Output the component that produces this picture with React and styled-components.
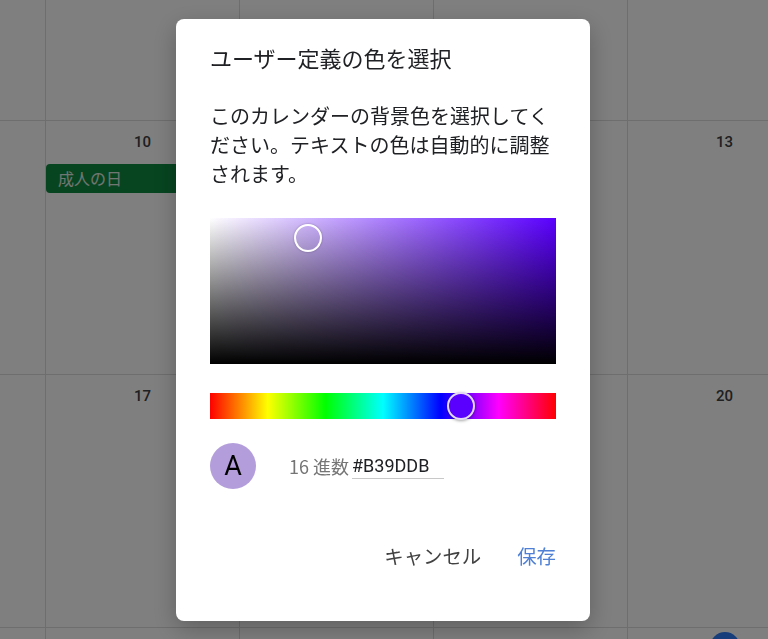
import React, { useState } from 'react';
import styled, { createGlobalStyle } from 'styled-components';

const GlobalStyle = createGlobalStyle`
  html, body {
    margin: 0;
    padding: 0;
    width: 768px;
    height: 639px;
    overflow: hidden;
    background: #ffffff;
    font-family: Roboto, "Noto Sans CJK JP", sans-serif;
  }
`;

// the month grid behind the dialog
const Month = styled.div`
  display: grid;
  grid-template-columns: 46px 194px 194px 194px 194px;
  grid-template-rows: 121px 254px 253px 253px;
  width: 768px;
  height: 639px;
  overflow: hidden;
`;

const Cell = styled.div`
  box-sizing: border-box;
  border-right: 1px solid #dcdcdc;
  border-bottom: 1px solid #dcdcdc;
  display: flex;
  flex-direction: column;
  align-items: center;
  padding-top: ${p => (p.$last ? 4 : 12)}px;
  min-width: 0;
`;

const DayNum = styled.div`
  font-family: Roboto, sans-serif;
  font-size: 15px;
  font-weight: 500;
  color: #3c4043;
  line-height: 18px;
`;

const TodayDot = styled.div`
  width: 30px;
  height: 30px;
  border-radius: 50%;
  background: #2f7cf6;
`;

const Holiday = styled.div`
  align-self: stretch;
  margin: 13px 4px 0 0;
  height: 29px;
  border-radius: 4px;
  background: #0e8a40;
  color: #e2ece5;
  font-family: "Noto Sans CJK JP", sans-serif;
  font-size: 16px;
  line-height: 29px;
  padding-left: 12px;
`;

const Scrim = styled.div`
  position: fixed;
  inset: 0;
  background: rgba(0, 0, 0, 0.5);
  display: flex;
  align-items: center;
  justify-content: center;
`;

const Dialog = styled.div`
  box-sizing: border-box;
  width: 414px;
  height: 602px;
  margin-left: -2px;
  background: #ffffff;
  border-radius: 8px;
  padding: 24px 34px 0 34px;
  display: flex;
  flex-direction: column;
  box-shadow: 0 8px 24px rgba(0, 0, 0, 0.25);
  font-family: "Noto Sans CJK JP", sans-serif;
`;

const Title = styled.h2`
  margin: 0;
  font-size: 22px;
  line-height: 28px;
  font-weight: 400;
  color: #202124;
`;

const Body = styled.p`
  margin: 30px 0 0 0;
  font-size: 20px;
  line-height: 29px;
  color: #202124;
`;

const SatBox = styled.div`
  position: relative;
  margin-top: 30px;
  height: 146px;
  background:
    linear-gradient(to top, #000000, rgba(0, 0, 0, 0)),
    linear-gradient(to right, #ffffff, ${p => p.$hueColor});
`;

const SatThumb = styled.div`
  position: absolute;
  width: 24px;
  height: 24px;
  margin: -14px 0 0 -14px;
  border: 2px solid #ffffff;
  border-radius: 50%;
  box-shadow: 0 0 2px rgba(0, 0, 0, 0.35);
`;

const HueBar = styled.div`
  position: relative;
  margin-top: 29px;
  height: 26px;
  background: linear-gradient(
    to right,
    #ff0000 0%,
    #ffff00 16.66%,
    #00ff00 33.33%,
    #00ffff 50%,
    #0000ff 66.66%,
    #ff00ff 83.33%,
    #ff0000 100%
  );
`;

const HueThumb = styled.div`
  position: absolute;
  top: 50%;
  width: 24px;
  height: 24px;
  margin: -14px 0 0 -14px;
  border: 2px solid #e4d8f6;
  border-radius: 50%;
  background: ${p => p.$hueColor};
  box-shadow: 0 1px 3px rgba(0, 0, 0, 0.35);
`;

const ValueRow = styled.div`
  display: flex;
  align-items: center;
  margin-top: 24px;
`;

const Swatch = styled.div`
  width: 46px;
  height: 46px;
  border-radius: 50%;
  background: ${p => p.$color};
  display: flex;
  align-items: center;
  justify-content: center;
  font-family: Roboto, sans-serif;
  font-size: 27px;
  font-weight: 400;
  color: #000000;
`;

const HexLabel = styled.span`
  margin-left: 33px;
  font-size: 18px;
  color: #757575;
`;

const HexInput = styled.input`
  box-sizing: border-box;
  width: 92px;
  height: 27px;
  margin-left: 3px;
  padding: 0;
  border: none;
  border-bottom: 1px solid #c8c8c8;
  outline: none;
  font-family: Roboto, sans-serif;
  font-size: 18px;
  color: #202124;
  background: transparent;
`;

const Actions = styled.div`
  display: flex;
  justify-content: flex-end;
  gap: 36px;
  margin-top: 49px;
`;

const TextButton = styled.button`
  border: none;
  background: none;
  padding: 0;
  height: 36px;
  font-family: "Noto Sans CJK JP", sans-serif;
  font-size: 19.4px;
  color: ${p => (p.$primary ? '#4f80d6' : '#424242')};
  cursor: pointer;
`;

const hexToHsv = (hex) => {
  const r = parseInt(hex.slice(1, 3), 16) / 255;
  const g = parseInt(hex.slice(3, 5), 16) / 255;
  const b = parseInt(hex.slice(5, 7), 16) / 255;
  const max = Math.max(r, g, b);
  const min = Math.min(r, g, b);
  const d = max - min;
  let h = 0;
  if (d) {
    if (max === r) h = ((g - b) / d) % 6;
    else if (max === g) h = (b - r) / d + 2;
    else h = (r - g) / d + 4;
  }
  h = (h * 60 + 360) % 360;
  return { h, s: max ? d / max : 0, v: max };
};

// only the day cells that show beside the dialog carry a number
const rows = [
  [{}, {}, {}, {}, {}],
  [{}, { n: 10, holiday: '成人の日' }, {}, {}, { n: 13 }],
  [{}, { n: 17 }, {}, {}, { n: 20 }],
  [{}, {}, {}, {}, { today: true }],
];

export default function App() {
  const [hex, setHex] = useState('#B39DDB');
  const { h, s, v } = hexToHsv(hex);
  const hueColor = `hsl(${h}, 100%, 50%)`;

  return (
    <>
      <GlobalStyle />
      <Month>
        {rows.map((row, ri) =>
          row.map((c, ci) => (
            <Cell key={ri + '-' + ci} $last={ri === 3}>
              {c.n && <DayNum>{c.n}</DayNum>}
              {c.holiday && <Holiday>{c.holiday}</Holiday>}
              {c.today && <TodayDot />}
            </Cell>
          ))
        )}
      </Month>

      <Scrim>
        <Dialog>
          <Title>ユーザー定義の色を選択</Title>
          <Body>
            このカレンダーの背景色を選択してください。テキストの色は自動的に調整されます。
          </Body>

          <SatBox $hueColor={hueColor}>
            <SatThumb style={{ left: `${s * 100}%`, top: `${(1 - v) * 100}%` }} />
          </SatBox>

          <HueBar>
            <HueThumb $hueColor={hueColor} style={{ left: `${(h / 360) * 100}%` }} />
          </HueBar>

          <ValueRow>
            <Swatch $color={hex}>A</Swatch>
            <HexLabel>16 進数</HexLabel>
            <HexInput value={hex} onChange={e => setHex(e.target.value)} />
          </ValueRow>

          <Actions>
            <TextButton>キャンセル</TextButton>
            <TextButton $primary>保存</TextButton>
          </Actions>
        </Dialog>
      </Scrim>
    </>
  );
}
